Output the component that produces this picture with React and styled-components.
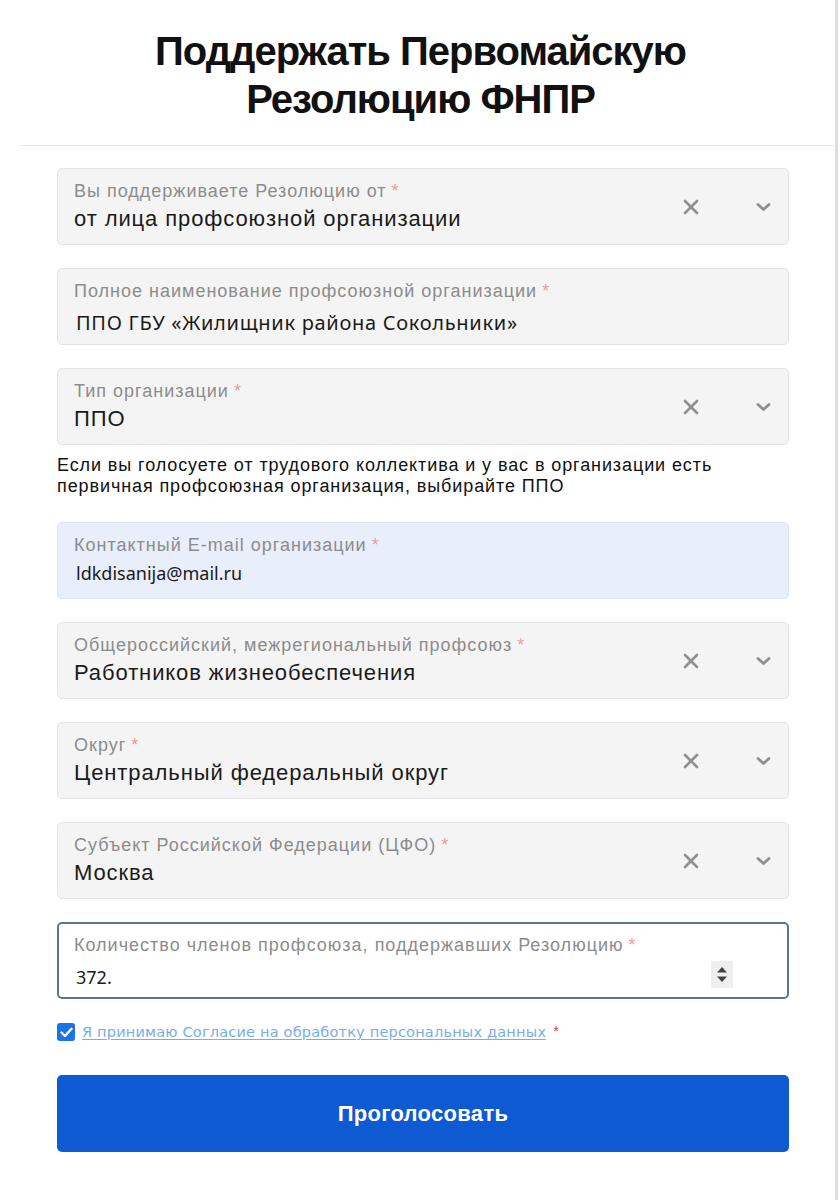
import React from "react";
import styled, { createGlobalStyle } from "styled-components";

const Global = createGlobalStyle`
  html, body { margin: 0; padding: 0; background: #fff; }
  body { font-family: "Liberation Sans", Arial, sans-serif; }
  * { box-sizing: border-box; }
`;

const Page = styled.div`
  width: 838px;
  min-height: 1200px;
  border-right: 3px solid #dedede;
  background: #fff;
`;

const Header = styled.header`
  height: 146px;
  margin-left: 20px;
  border-bottom: 1px solid #e8e8e8;
  display: flex;
  align-items: center;
  justify-content: center;
`;

const Title = styled.h1`
  margin: 0;
  font-family: "Liberation Sans", Arial, sans-serif;
  font-weight: 700;
  font-size: 40px;
  letter-spacing: -1px;
  line-height: 48px;
  color: #111;
  text-align: center;
  transform: translate(-7px, 2px);
`;

const Form = styled.form`
  padding: 22px 0 0 57px;
  width: 789px;
  display: flex;
  flex-direction: column;
`;

const bgFor = (v) => (v === "blue" ? "#e8eefa" : v === "focus" ? "#fff" : "#f4f4f4");
const borderFor = (v) =>
  v === "focus" ? "2px solid #5b7491" : v === "blue" ? "1px solid #dde4ef" : "1px solid #e4e4e4";

const Field = styled.div`
  height: 77px;
  border-radius: 5px;
  background: ${(p) => bgFor(p.$variant)};
  border: ${(p) => borderFor(p.$variant)};
  display: flex;
  align-items: stretch;
  padding-left: ${(p) => (p.$variant === "focus" ? "15px" : "16px")};
  margin-top: ${(p) => p.$mt ?? 23}px;
`;

const Body = styled.div`
  flex: 1;
  display: flex;
  flex-direction: column;
  min-width: 0;
  padding-top: ${(p) => (p.$variant === "focus" ? "11px" : "12px")};
`;

const Label = styled.div`
  font-size: 18px;
  letter-spacing: 1px;
  line-height: 20px;
  color: #8c8c8c;
  white-space: nowrap;
`;

const Star = styled.span`
  color: #ec9d9d;
  margin-left: 5px;
`;

const SelectValue = styled.div`
  font-size: 22px;
  letter-spacing: 0.9px;
  line-height: 26px;
  color: #1a1a1a;
  margin-top: 5px;
  white-space: nowrap;
`;

const TextValue = styled.div`
  font-family: "Noto Sans", "Open Sans", sans-serif;
  font-size: ${(p) => p.$size || 18}px;
  letter-spacing: ${(p) => p.$ls || 0}px;
  line-height: 26px;
  color: #1a1a1a;
  margin-top: ${(p) => p.$gap || 9}px;
  padding-left: 2px;
  white-space: nowrap;
`;

const Icons = styled.div`
  display: flex;
  align-items: center;
  padding-right: 8px;
`;

const IconBox = styled.div`
  width: ${(p) => p.$w}px;
  margin-left: ${(p) => p.$ml || 0}px;
  display: flex;
  align-items: center;
  justify-content: center;
  color: #8f8f8f;
`;

const Help = styled.p`
  margin: 10px 0 0 0;
  font-size: 18px;
  letter-spacing: 0.9px;
  line-height: 21px;
  color: #111;
  white-space: nowrap;
`;

const Spinner = styled.div`
  align-self: flex-start;
  width: 22px;
  height: 27px;
  background: #efefef;
  display: flex;
  flex-direction: column;
  align-items: center;
  justify-content: center;
  gap: 3px;
  margin-right: 54px;
  margin-top: 37px;
`;

const ConsentRow = styled.div`
  display: flex;
  align-items: center;
  margin-top: 23px;
  height: 20px;
`;

const Check = styled.span`
  width: 18px;
  height: 18px;
  border-radius: 3px;
  background: #1a73e8;
  display: inline-flex;
  align-items: center;
  justify-content: center;
  margin-right: 7px;
`;

const ConsentLink = styled.a`
  font-family: "DejaVu Sans", Verdana, sans-serif;
  font-size: 14.5px;
  letter-spacing: 0.2px;
  color: #78aee6;
  text-decoration: underline;
  text-underline-offset: 2px;
`;

const ReqStar = styled.span`
  color: #d64545;
  font-size: 15px;
  margin-left: 7px;
  margin-top: -4px;
`;

const Button = styled.button`
  margin-top: 33px;
  height: 77px;
  width: 732px;
  border: none;
  border-radius: 5px;
  background: #0e5ad2;
  color: #fff;
  font-family: "Liberation Sans", Arial, sans-serif;
  font-weight: 700;
  font-size: 22px;
  letter-spacing: 0.3px;
  cursor: pointer;
`;

const Clear = () => (
  <svg width="16" height="16" viewBox="0 0 16 16">
    <path d="M2 2 L14 14 M14 2 L2 14" stroke="currentColor" strokeWidth="2.6" strokeLinecap="round" />
  </svg>
);

const Chevron = () => (
  <svg width="15" height="10" viewBox="0 0 15 10">
    <path d="M2 2.5 L7.5 7.5 L13 2.5" fill="none" stroke="currentColor" strokeWidth="2.8" strokeLinecap="round" strokeLinejoin="round" />
  </svg>
);

const SelectField = ({ label, value, mt }) => (
  <Field $mt={mt}>
    <Body>
      <Label>
        {label}
        <Star>*</Star>
      </Label>
      <SelectValue>{value}</SelectValue>
    </Body>
    <Icons>
      <IconBox $w={30}>
        <Clear />
      </IconBox>
      <IconBox $w={34} $ml={40}>
        <Chevron />
      </IconBox>
    </Icons>
  </Field>
);

const TextField = ({ label, value, variant, mt, size, ls, gap }) => (
  <Field $variant={variant} $mt={mt}>
    <Body $variant={variant}>
      <Label>
        {label}
        <Star>*</Star>
      </Label>
      <TextValue $size={size} $ls={ls} $gap={gap}>
        {value}
      </TextValue>
    </Body>
  </Field>
);

export default function App() {
  return (
    <>
      <Global />
      <Page>
        <Header>
          <Title>
            Поддержать Первомайскую
            <br />
            Резолюцию ФНПР
          </Title>
        </Header>
        <Form onSubmit={(e) => e.preventDefault()}>
          <SelectField mt={0} label="Вы поддерживаете Резолюцию от" value="от лица профсоюзной организации" />
          <TextField
            label="Полное наименование профсоюзной организации"
            value="ППО ГБУ «Жилищник района Сокольники»"
            size={20}
            ls={0.7}
          />
          <SelectField label="Тип организации" value="ППО" />
          <Help>
            Если вы голосуете от трудового коллектива и у вас в организации есть
            <br />
            первичная профсоюзная организация, выбирайте ППО
          </Help>
          <TextField mt={25} variant="blue" label="Контактный E-mail организации" value="ldkdisanija@mail.ru" gap={5} />
          <SelectField label="Общероссийский, межрегиональный профсоюз" value="Работников жизнеобеспечения" />
          <SelectField label="Округ" value="Центральный федеральный округ" />
          <SelectField label="Субъект Российской Федерации (ЦФО)" value="Москва" />
          <Field $variant="focus">
            <Body $variant="focus">
              <Label>
                Количество членов профсоюза, поддержавших Резолюцию
                <Star>*</Star>
              </Label>
              <TextValue $gap={9}>372.</TextValue>
            </Body>
            <Spinner>
              <svg width="12" height="7" viewBox="0 0 12 7">
                <path d="M1 6.5 L6 1 L11 6.5 Z" fill="#444" />
              </svg>
              <svg width="12" height="7" viewBox="0 0 12 7">
                <path d="M1 0.5 L6 6 L11 0.5 Z" fill="#444" />
              </svg>
            </Spinner>
          </Field>
          <ConsentRow>
            <Check>
              <svg width="13" height="11" viewBox="0 0 13 11">
                <path d="M1.5 5.5 L5 9 L11.5 1.8" fill="none" stroke="#fff" strokeWidth="2.4" strokeLinecap="round" strokeLinejoin="round" />
              </svg>
            </Check>
            <ConsentLink href="#">Я принимаю Согласие на обработку персональных данных</ConsentLink>
            <ReqStar>*</ReqStar>
          </ConsentRow>
          <Button type="submit">Проголосовать</Button>
        </Form>
      </Page>
    </>
  );
}
